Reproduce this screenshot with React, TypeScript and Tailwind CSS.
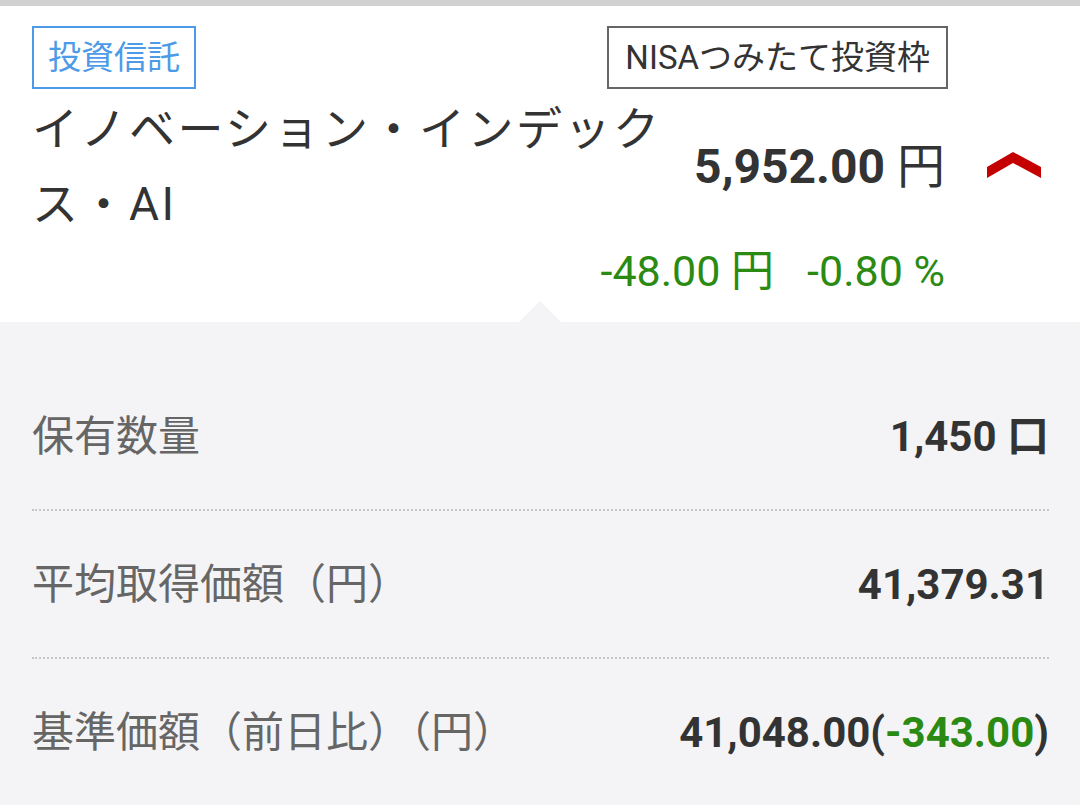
const JP = "font-['Roboto','Noto_Sans_CJK_JP',sans-serif]";

type Row = { label: string; value: React.ReactNode };

const rows: Row[] = [
  { label: "保有数量", value: <>1,450 口</> },
  { label: "平均取得価額（円）", value: <>41,379.31</> },
  {
    label: "基準価額（前日比）（円）",
    value: (
      <>
        41,048.00(<span className="text-[#2b8a12]">-343.00</span>)
      </>
    ),
  },
];

export default function App() {
  return (
    <div className={`min-h-[805px] w-[1080px] bg-[#f4f4f6] ${JP}`}>
      <div className="h-[6px] bg-[#d1d1d1]" />

      <div className="relative flex bg-white pb-[27px] pl-[32px] pt-[20px]">
        <div className="flex w-[916px] flex-col">
          <div className="flex items-center justify-between">
            <span className="flex h-[63px] items-center border-2 border-[#4d9be6] px-[14px] text-[33px] text-[#4d9be6]">
              投資信託
            </span>
            <span className="flex h-[63px] items-center border-2 border-[#666] px-[16px] text-[33px] text-[#333]">
              NISAつみたて投資枠
            </span>
          </div>

          <div className="mt-[3px] flex items-center justify-between">
            <div className="w-[640px] shrink-0 text-[46px] leading-[75px] tracking-[2.5px] text-[#333]">
              イノベーション・インデックス・AI
            </div>
            <div className="whitespace-nowrap pr-[3px] text-[48px] text-[#333]">
              <span className="font-bold">5,952.00</span> 円
            </div>
          </div>

          <div className="mt-[5px] flex justify-end gap-[33px] pr-[3px] text-[43px] leading-[48px] text-[#2b8a12]">
            <span>-48.00 円</span>
            <span>-0.80 %</span>
          </div>
        </div>

        <div className="flex flex-1 items-start justify-center pt-[126px]">
          <svg width="54" height="26" viewBox="0 0 54 26">
            <path d="M0 15 L26 0 L54 15 L54 26 L26 11 L0 26 Z" fill="#c40000" />
          </svg>
        </div>

        <div className="absolute bottom-0 left-[519px] h-0 w-0 border-x-[21px] border-b-[21px] border-x-transparent border-b-[#f4f4f6]" />
      </div>

      <div className="pl-[32px] pr-[31px] pt-[41px]">
        {rows.map((r, i) => (
          <div key={r.label}>
            {i > 0 ? <div className="border-t-2 border-dotted border-[#c6c6c6]" /> : null}
            <div className="flex h-[146px] items-center justify-between">
              <span className="text-[42px] text-[#666]">{r.label}</span>
              <span className="text-[42px] font-bold text-[#333]">{r.value}</span>
            </div>
          </div>
        ))}
      </div>
    </div>
  );
}
